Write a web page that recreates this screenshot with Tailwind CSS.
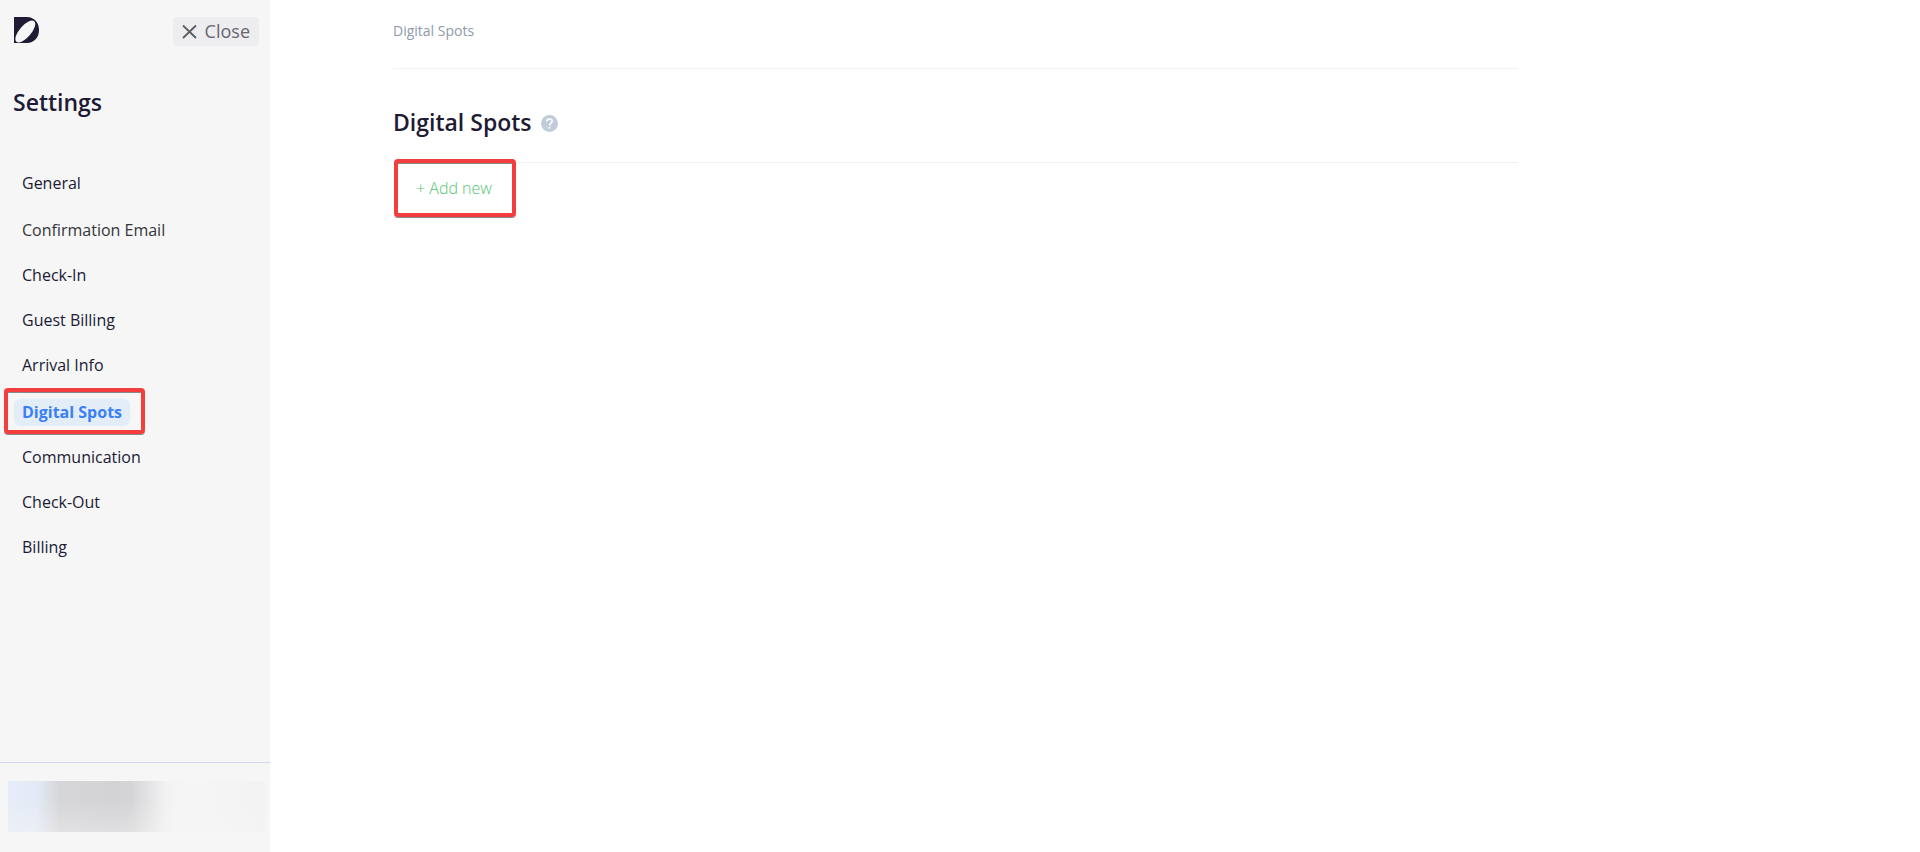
<!DOCTYPE html>
<html lang="en">
<head>
  <meta charset="UTF-8">
  <meta name="viewport" content="width=device-width, initial-scale=1.0">
  <title>Settings - Digital Spots</title>
  <script src="https://cdn.jsdelivr.net/npm/@tailwindcss/browser@4"></script>
</head>
<body class="flex min-h-screen bg-white font-['Open_Sans',sans-serif] text-[#201a35]">

  <!-- Sidebar -->
  <aside class="flex w-[270px] shrink-0 flex-col bg-[#f6f6f6]">
    <div class="flex items-start justify-between pt-[17px] pr-[11px] pl-[14px]">
      <a href="#" aria-label="Home">
        <svg class="h-[26px] w-[25px]" viewBox="0 0 25 26">
          <path d="M0 0H13C20 0 25 5.500 25 13S20 26 13 26H0Z" fill="#201a35"/>
          <ellipse cx="11.300" cy="14.500" rx="13.600" ry="5.800" transform="rotate(-49 11.300 14.500)" fill="#f6f6f6"/>
        </svg>
      </a>
      <button type="button" class="flex h-[29px] items-center gap-2 rounded bg-[#ededf0] px-[9px] text-lg leading-7 text-[#66666e]">
        <svg class="h-[15px] w-[15px]" viewBox="0 0 15 15" fill="none" stroke="#5c5c64" stroke-width="1.800">
          <path d="M1 1.500L14 14M14 1.500L1 14"/>
        </svg>
        <span class="pb-0.5">Close</span>
      </button>
    </div>

    <h1 class="mt-10 pl-[13px] text-[23px] leading-8 font-semibold">Settings</h1>

    <nav class="mt-[52px] flex flex-col gap-5 pl-[14px] text-base leading-[27px] font-medium">
      <ul>
        <li><a href="#" class="px-2">General</a></li>
      </ul>
      <ul class="flex flex-col gap-[18px]">
        <li><a href="#" class="px-2 text-[#35353a]">Confirmation Email</a></li>
        <li><a href="#" class="px-2">Check-In</a></li>
        <li><a href="#" class="px-2">Guest Billing</a></li>
        <li><a href="#" class="px-2">Arrival Info</a></li>
      </ul>
      <ul class="flex flex-col gap-[18px]">
        <li class="relative">
          <a href="#" class="inline-block rounded-md bg-[#e3edf8] px-2 align-top font-bold text-[#3a7ff6]">Digital Spots</a>
          <span class="pointer-events-none absolute -top-[11px] -left-[10px] h-[46px] w-[141px] rounded border-4 border-[#f43e3e] shadow-[0_1px_0_#888,inset_0_1px_0_#888]"></span>
        </li>
        <li><a href="#" class="px-2">Communication</a></li>
        <li><a href="#" class="px-2">Check-Out</a></li>
        <li><a href="#" class="px-2">Billing</a></li>
      </ul>
    </nav>

    <!-- Account, hidden behind a blur -->
    <div class="mt-auto border-t border-[#cfd8ea] pt-[18px] pr-[5px] pb-5 pl-2">
      <div class="h-[51px] bg-[linear-gradient(to_right,#e7edf8_0%,#e4eaf5_11%,#d6d6d9_20%,#d3d3d6_42%,#d5d5d7_48%,#e6e6e8_56%,#f1f1f1_61%,#f5f5f5_67%,#f5f5f5_77%,#f2f2f2_100%)]">
        <div class="h-full bg-linear-to-b from-[#f6f6f6]/0 from-40% to-[#f6f6f6]/35"></div>
      </div>
    </div>
  </aside>

  <!-- Content -->
  <main class="min-w-0 flex-1 px-[123px]">
    <div class="max-w-[1125px]">
      <div class="border-b border-[#f0f1f5] pt-5 pb-[27px] text-sm leading-[21px] font-medium text-[#8d9aab]">Digital Spots</div>

      <div class="flex items-center gap-[9px] border-b border-[#f0f1f5] pt-[38px] pb-[22px]">
        <h2 class="pb-0.5 text-[23px] leading-[31px] font-semibold">Digital Spots</h2>
        <button type="button" aria-label="Help">
          <svg class="h-[17px] w-[17px]" viewBox="0 0 17 17">
            <circle cx="8.500" cy="8.500" r="8.500" fill="#c1ccda"/>
            <path d="M5.900 6.500C5.900 4.900 7 3.900 8.500 3.900S11.200 4.900 11.200 6.300C11.200 8 8.500 8.300 8.500 10.400" fill="none" stroke="#fff" stroke-width="1.500"/>
            <circle cx="8.500" cy="12.800" r="1" fill="#fff"/>
          </svg>
        </button>
      </div>

      <div class="relative pt-[13px] pl-[23px]">
        <button type="button" class="text-base leading-6 font-light text-[#54c573]">+ Add new</button>
        <span class="pointer-events-none absolute -top-1 left-px h-[58px] w-[122px] rounded border-4 border-[#f43e3e] shadow-[0_1px_0_#888,inset_0_1px_0_#888]"></span>
      </div>
    </div>
  </main>

</body>
</html>
